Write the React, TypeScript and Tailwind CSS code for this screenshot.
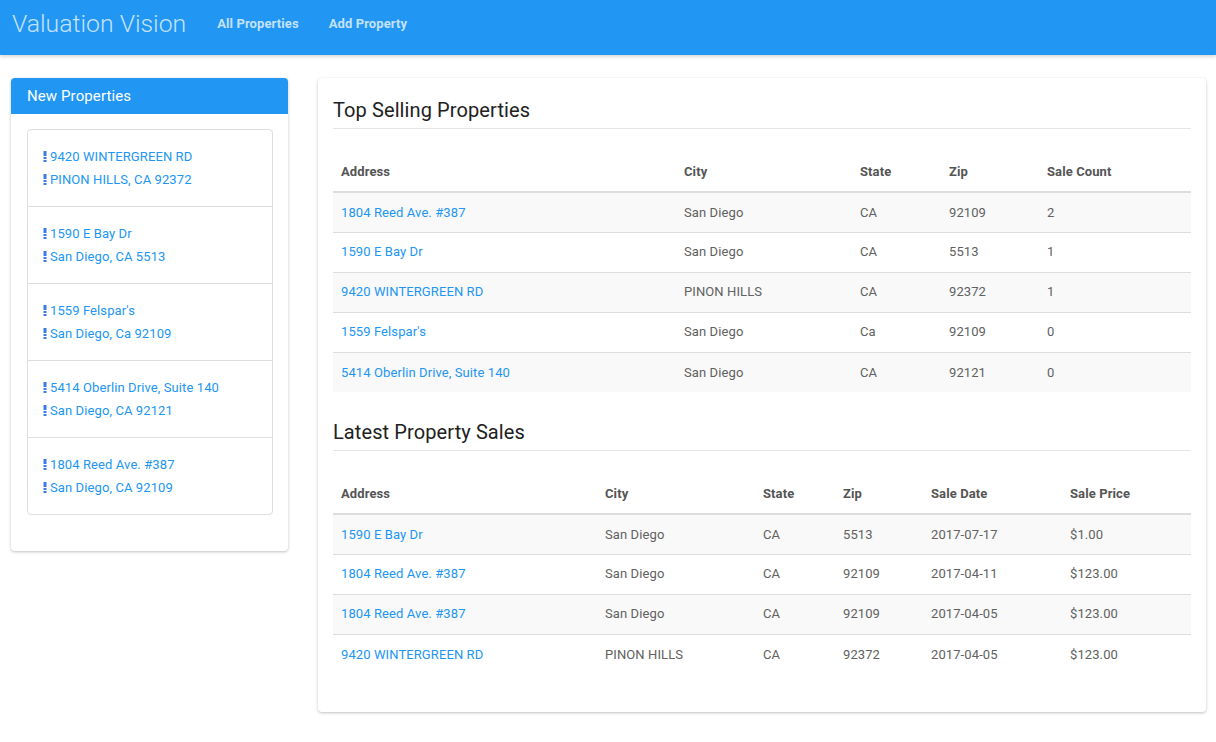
import React from "react";

type TopRow = { address: string; city: string; state: string; zip: string; count: string };
type SaleRow = { address: string; city: string; state: string; zip: string; date: string; price: string };

const newProperties = [
  { street: "9420 WINTERGREEN RD", city: "PINON HILLS, CA 92372" },
  { street: "1590 E Bay Dr", city: "San Diego, CA 5513" },
  { street: "1559 Felspar's", city: "San Diego, Ca 92109" },
  { street: "5414 Oberlin Drive, Suite 140", city: "San Diego, CA 92121" },
  { street: "1804 Reed Ave. #387", city: "San Diego, CA 92109" },
];

const topSelling: TopRow[] = [
  { address: "1804 Reed Ave. #387", city: "San Diego", state: "CA", zip: "92109", count: "2" },
  { address: "1590 E Bay Dr", city: "San Diego", state: "CA", zip: "5513", count: "1" },
  { address: "9420 WINTERGREEN RD", city: "PINON HILLS", state: "CA", zip: "92372", count: "1" },
  { address: "1559 Felspar's", city: "San Diego", state: "Ca", zip: "92109", count: "0" },
  { address: "5414 Oberlin Drive, Suite 140", city: "San Diego", state: "CA", zip: "92121", count: "0" },
];

const latestSales: SaleRow[] = [
  { address: "1590 E Bay Dr", city: "San Diego", state: "CA", zip: "5513", date: "2017-07-17", price: "$1.00" },
  { address: "1804 Reed Ave. #387", city: "San Diego", state: "CA", zip: "92109", date: "2017-04-11", price: "$123.00" },
  { address: "1804 Reed Ave. #387", city: "San Diego", state: "CA", zip: "92109", date: "2017-04-05", price: "$123.00" },
  { address: "9420 WINTERGREEN RD", city: "PINON HILLS", state: "CA", zip: "92372", date: "2017-04-05", price: "$123.00" },
];

function Marker() {
  return (
    <svg width="4" height="11" viewBox="0 0 4 11" className="mr-[3px] shrink-0">
      <rect x="0.5" y="0" width="3" height="5" fill="#3b7be6" />
      <rect x="0.5" y="6" width="3" height="2" fill="#3b7be6" />
      <rect x="0.5" y="9" width="3" height="2" fill="#3b7be6" />
    </svg>
  );
}

const th = "px-2 h-10 text-left font-bold text-[#555] align-middle";
const td = "px-2 h-10 align-middle";

export default function App() {
  return (
    <div className="min-h-screen bg-white font-['Roboto',sans-serif] text-[13px] tracking-[0.1px] text-[#616161]">
      <nav className="h-[55px] bg-[#2196f3] flex items-start pt-[9px] shadow-[0_2px_3px_rgba(0,0,0,0.15)]">
        <span className="pl-3 text-[24.8px] leading-[30px] font-light text-[#c3e2fb] tracking-normal">
          Valuation Vision
        </span>
        <a className="ml-[31px] text-[13px] leading-[30px] font-bold text-[#c3e2fb]">All Properties</a>
        <a className="ml-[30px] text-[13px] leading-[30px] font-bold text-[#c3e2fb]">Add Property</a>
      </nav>

      <div className="flex items-start pl-[11px] pt-[23px] gap-[30px]">
        <aside className="w-[277px] bg-white rounded-sm shadow-[0_1px_3px_rgba(0,0,0,0.25)]">
          <div className="h-9 bg-[#2196f3] rounded-t-sm flex items-center pl-4 text-[15px] text-white">
            New Properties
          </div>
          <div className="pl-4 pr-[15px] pt-[15px] pb-9">
            <ul className="border border-[#ddd] rounded-sm">
              {newProperties.map((p, i) => (
                <li
                  key={i}
                  className={`px-[15px] py-[15px] ${i > 0 ? "border-t border-[#ddd]" : ""}`}
                >
                  <div className="flex items-center h-[23px] text-[#2196f3]">
                    <Marker />
                    {p.street}
                  </div>
                  <div className="flex items-center h-[23px] text-[#2196f3]">
                    <Marker />
                    {p.city}
                  </div>
                </li>
              ))}
            </ul>
          </div>
        </aside>

        <main className="w-[888px] bg-white rounded-sm shadow-[0_1px_3px_rgba(0,0,0,0.25)] px-[15px] pt-[21px] pb-[38px]">
          <h3 className="text-[20px] leading-[22px] text-[#212121] pb-[7px] border-b border-[#e5e5e5]">
            Top Selling Properties
          </h3>
          <table className="w-full mt-[23px] border-collapse">
            <thead>
              <tr className="border-b-2 border-[#ddd]">
                <th className={`${th} w-[343px]`}>Address</th>
                <th className={`${th} w-[176px]`}>City</th>
                <th className={`${th} w-[89px]`}>State</th>
                <th className={`${th} w-[98px]`}>Zip</th>
                <th className={th}>Sale Count</th>
              </tr>
            </thead>
            <tbody>
              {topSelling.map((r, i) => (
                <tr
                  key={i}
                  className={`${i % 2 === 0 ? "bg-[#f9f9f9]" : "bg-white"} ${
                    i < topSelling.length - 1 ? "border-b border-[#ddd]" : ""
                  }`}
                >
                  <td className={`${td} text-[#2196f3]`}>{r.address}</td>
                  <td className={td}>{r.city}</td>
                  <td className={td}>{r.state}</td>
                  <td className={td}>{r.zip}</td>
                  <td className={td}>{r.count}</td>
                </tr>
              ))}
            </tbody>
          </table>

          <h3 className="mt-[29px] text-[20px] leading-[22px] text-[#212121] pb-[7px] border-b border-[#e5e5e5]">
            Latest Property Sales
          </h3>
          <table className="w-full mt-[23px] border-collapse">
            <thead>
              <tr className="border-b-2 border-[#ddd]">
                <th className={`${th} w-[264px]`}>Address</th>
                <th className={`${th} w-[158px]`}>City</th>
                <th className={`${th} w-[80px]`}>State</th>
                <th className={`${th} w-[88px]`}>Zip</th>
                <th className={`${th} w-[139px]`}>Sale Date</th>
                <th className={th}>Sale Price</th>
              </tr>
            </thead>
            <tbody>
              {latestSales.map((r, i) => (
                <tr
                  key={i}
                  className={`${i % 2 === 0 ? "bg-[#f9f9f9]" : "bg-white"} ${
                    i < latestSales.length - 1 ? "border-b border-[#ddd]" : ""
                  }`}
                >
                  <td className={`${td} text-[#2196f3]`}>{r.address}</td>
                  <td className={td}>{r.city}</td>
                  <td className={td}>{r.state}</td>
                  <td className={td}>{r.zip}</td>
                  <td className={td}>{r.date}</td>
                  <td className={td}>{r.price}</td>
                </tr>
              ))}
            </tbody>
          </table>
        </main>
      </div>
    </div>
  );
}
